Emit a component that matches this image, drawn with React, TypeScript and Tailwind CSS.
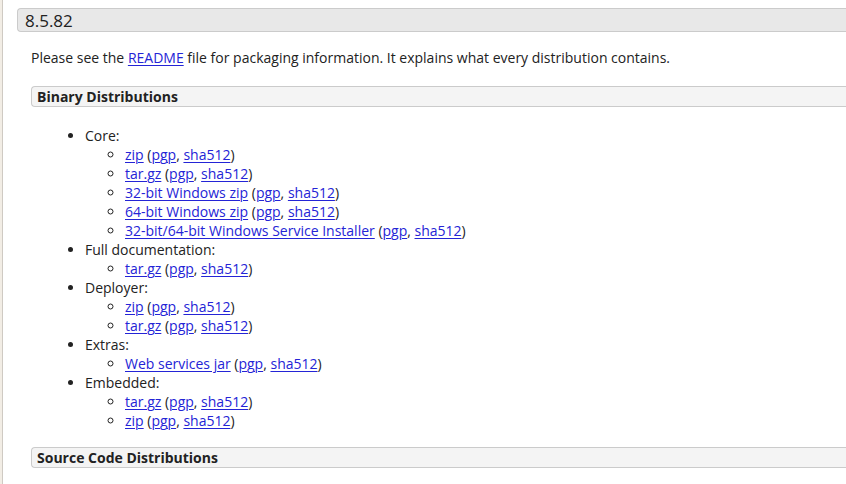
import React from "react";

const L = ({ children }: { children: React.ReactNode }) => (
  <a href="#" className="text-[#2424d6] underline underline-offset-[2px] decoration-1">{children}</a>
);

const Item = ({ name }: { name: string }) => (
  <li>
    <L>{name}</L> (<L>pgp</L>, <L>sha512</L>)
  </li>
);

export default function App() {
  return (
    <div className="flex w-[846px] h-[484px] overflow-hidden bg-white text-[#222] text-[14px] leading-[19px]" style={{ fontFamily: '"Open Sans", sans-serif' }}>
      <div className="w-[2px] shrink-0 bg-[#f2ede5]" />
      <div className="w-px shrink-0 bg-[#cfcac3]" />
      <div className="flex-1 pl-[14px] pt-[8px]">
        <div className="h-[24px] flex items-center pl-[7px] bg-[#e8e8e8] border border-r-0 border-[#cbcbcb] rounded-l-[4px] text-[17px] -mr-[4px]">
          8.5.82
        </div>
        <div className="pl-[14px]">
          <p className="mt-[16px]">
            Please see the <L>README</L> file for packaging information. It explains what every distribution contains.
          </p>
          <div className="mt-[19px] h-[21px] flex items-center pl-[5px] bg-[#f4f4f4] border border-r-0 border-[#cbcbcb] rounded-l-[4px] font-bold -mr-[4px]">
            Binary Distributions
          </div>
          <ul className="list-disc pl-[54px] mt-[19px]">
            <li>
              Core:
              <ul className="list-[circle] pl-[40px]">
                <Item name="zip" />
                <Item name="tar.gz" />
                <Item name="32-bit Windows zip" />
                <Item name="64-bit Windows zip" />
                <Item name="32-bit/64-bit Windows Service Installer" />
              </ul>
            </li>
            <li>
              Full documentation:
              <ul className="list-[circle] pl-[40px]">
                <Item name="tar.gz" />
              </ul>
            </li>
            <li>
              Deployer:
              <ul className="list-[circle] pl-[40px]">
                <Item name="zip" />
                <Item name="tar.gz" />
              </ul>
            </li>
            <li>
              Extras:
              <ul className="list-[circle] pl-[40px]">
                <Item name="Web services jar" />
              </ul>
            </li>
            <li>
              Embedded:
              <ul className="list-[circle] pl-[40px]">
                <Item name="tar.gz" />
                <Item name="zip" />
              </ul>
            </li>
          </ul>
          <div className="mt-[17px] h-[21px] flex items-center pl-[5px] bg-[#f4f4f4] border border-r-0 border-[#cbcbcb] rounded-l-[4px] font-bold -mr-[4px]">
            Source Code Distributions
          </div>
        </div>
      </div>
    </div>
  );
}
